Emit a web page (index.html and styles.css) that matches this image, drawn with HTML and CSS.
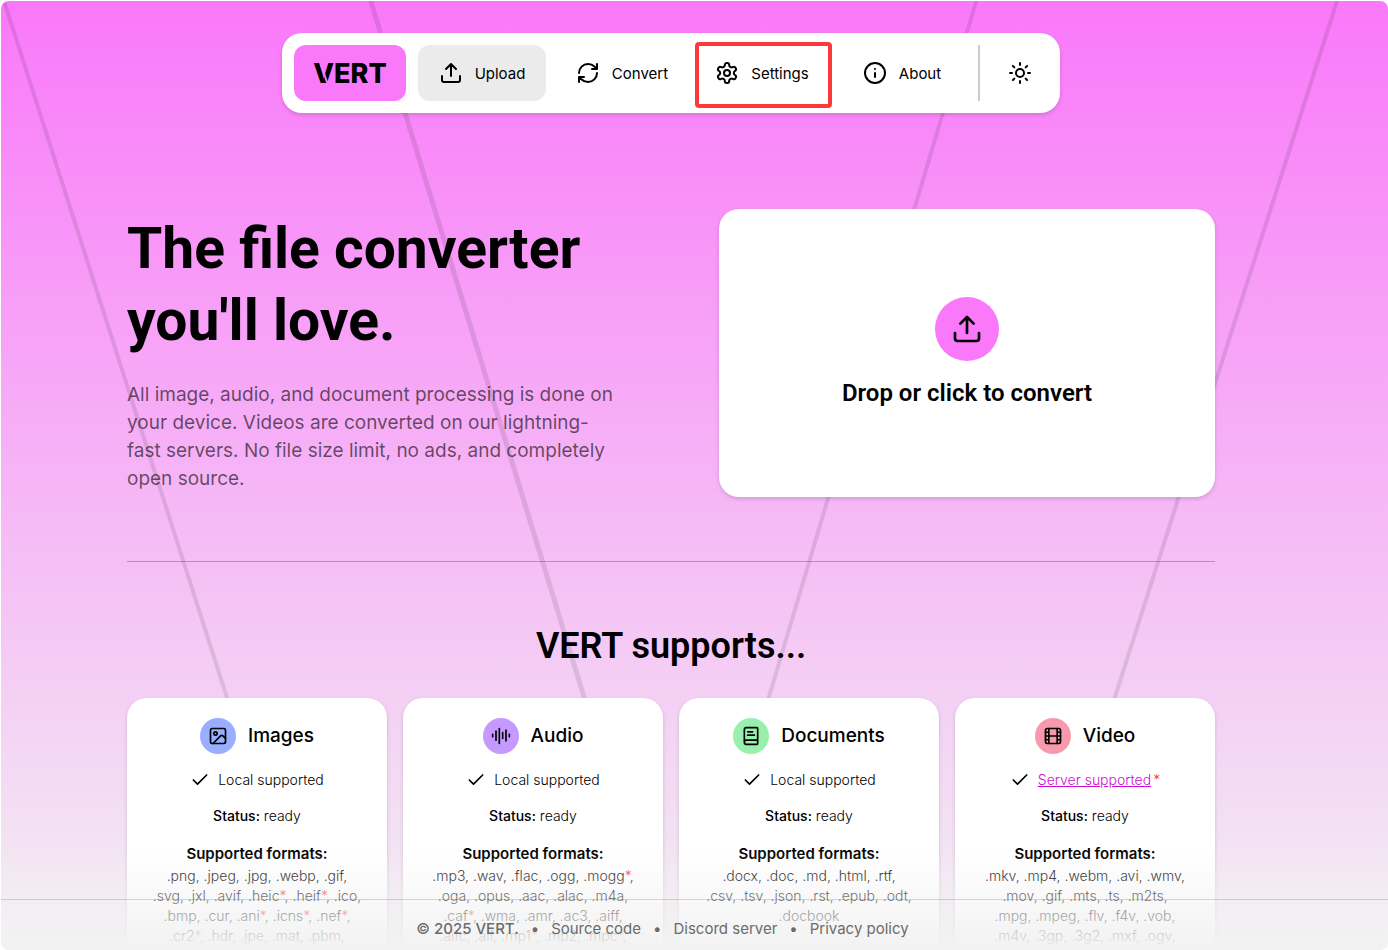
FILE: index.html
```html
<!DOCTYPE html>
<html lang="en">
<head>
    <meta charset="UTF-8">
    <meta name="viewport" content="width=device-width, initial-scale=1.0">
    <title>VERT</title>
    <link rel="stylesheet" href="styles.css">
</head>
<body>
<div class="page">
    <svg class="lines" viewBox="0 0 1388 950" preserveAspectRatio="none" aria-hidden="true">
        <path d="M3 0L307 950" stroke-width="4"/>
        <path d="M370 0L661 950" stroke-width="5"/>
        <path d="M976 0L693 950" stroke-width="4"/>
        <path d="M1337 0L1034 950" stroke-width="4"/>
    </svg>

    <header class="top">
        <nav class="navbar">
            <a class="logo" href="#"><span>VERT</span></a>
            <a class="nav-item active" href="#">
                <svg class="icon" viewBox="0 0 24 24"><path d="M21 15v4a2 2 0 0 1-2 2H5a2 2 0 0 1-2-2v-4M17 8l-5-5-5 5M12 3v12"/></svg>
                Upload
            </a>
            <a class="nav-item" href="#">
                <svg class="icon" viewBox="0 0 24 24"><path d="M3 12a9 9 0 0 1 9-9 9.75 9.75 0 0 1 6.74 2.74L21 8M21 3v5h-5M21 12a9 9 0 0 1-9 9 9.75 9.75 0 0 1-6.74-2.74L3 16M8 16H3v5"/></svg>
                Convert
            </a>
            <a class="nav-item marked" href="#">
                <svg class="icon" viewBox="0 0 24 24"><path d="M12.22 2h-.44a2 2 0 0 0-2 2v.18a2 2 0 0 1-1 1.73l-.43.25a2 2 0 0 1-2 0l-.15-.08a2 2 0 0 0-2.73.73l-.22.38a2 2 0 0 0 .73 2.73l.15.1a2 2 0 0 1 1 1.72v.51a2 2 0 0 1-1 1.74l-.15.09a2 2 0 0 0-.73 2.73l.22.38a2 2 0 0 0 2.73.73l.15-.08a2 2 0 0 1 2 0l.43.25a2 2 0 0 1 1 1.73V20a2 2 0 0 0 2 2h.44a2 2 0 0 0 2-2v-.18a2 2 0 0 1 1-1.73l.43-.25a2 2 0 0 1 2 0l.15.08a2 2 0 0 0 2.73-.73l.22-.39a2 2 0 0 0-.73-2.73l-.15-.08a2 2 0 0 1-1-1.74v-.5a2 2 0 0 1 1-1.74l.15-.09a2 2 0 0 0 .73-2.73l-.22-.38a2 2 0 0 0-2.73-.73l-.15.08a2 2 0 0 1-2 0l-.43-.25a2 2 0 0 1-1-1.73V4a2 2 0 0 0-2-2z"/><circle cx="12" cy="12" r="3"/></svg>
                Settings
            </a>
            <a class="nav-item" href="#">
                <svg class="icon" viewBox="0 0 24 24"><circle cx="12" cy="12" r="10"/><path d="M12 16v-4M12 8h.01"/></svg>
                About
            </a>
            <div class="separator"></div>
            <button class="theme-btn" aria-label="Theme">
                <svg class="icon" viewBox="0 0 24 24"><circle cx="12" cy="12" r="4"/><path d="M12 2v2M12 20v2M4.93 4.93l1.41 1.41M17.66 17.66l1.41 1.41M2 12h2M20 12h2M6.34 17.66l-1.41 1.41M19.07 4.93l-1.41 1.41"/></svg>
            </button>
        </nav>
    </header>

    <main class="content">
        <section class="hero">
            <div class="intro">
                <h1>The file converter<br>you'll love.</h1>
                <p>All image, audio, and document processing is done on<br>your device. Videos are converted on our lightning-<br>fast servers. No file size limit, no ads, and completely<br>open source.</p>
            </div>
            <button class="dropzone">
                <span class="drop-icon">
                    <svg viewBox="0 0 24 24"><path d="M21 15v4a2 2 0 0 1-2 2H5a2 2 0 0 1-2-2v-4M17 8l-5-5-5 5M12 3v12"/></svg>
                </span>
                Drop or click to convert
            </button>
        </section>

        <hr>

        <section class="supports">
            <h2>VERT supports...</h2>
            <div class="cards">
                <div class="card">
                    <h3><span class="badge blue"><svg viewBox="0 0 24 24"><rect x="3" y="3" width="18" height="18" rx="2"/><circle cx="9" cy="9" r="2"/><path d="m21 15-3.086-3.086a2 2 0 0 0-2.828 0L6 21"/></svg></span>Images</h3>
                    <p class="support"><svg viewBox="0 0 24 24"><path d="M20 6 9 17l-5-5"/></svg>Local supported</p>
                    <p><b>Status:</b> ready</p>
                    <div class="formats">
                        <h4>Supported formats:</h4>
                        <p>.png, .jpeg, .jpg, .webp, .gif,<br>.svg, .jxl, .avif, .heic<i>*</i>, .heif<i>*</i>, .ico,<br>.bmp, .cur, .ani<i>*</i>, .icns<i>*</i>, .nef<i>*</i>,<br>.cr2<i>*</i>, .hdr, .jpe, .mat, .pbm,</p>
                    </div>
                </div>
                <div class="card">
                    <h3><span class="badge purple"><svg viewBox="0 0 24 24"><path d="M2 10v3M6 6v11M10 3v18M14 8v7M18 5v13M22 10v3"/></svg></span>Audio</h3>
                    <p class="support"><svg viewBox="0 0 24 24"><path d="M20 6 9 17l-5-5"/></svg>Local supported</p>
                    <p><b>Status:</b> ready</p>
                    <div class="formats">
                        <h4>Supported formats:</h4>
                        <p>.mp3, .wav, .flac, .ogg, .mogg<i>*</i>,<br>.oga, .opus, .aac, .alac, .m4a,<br>.caf<i>*</i>, .wma, .amr, .ac3, .aiff,<br>.aifc, .aif, .mp1<i>*</i>, .mp2, .mpc<i>*</i>,</p>
                    </div>
                </div>
                <div class="card">
                    <h3><span class="badge green"><svg viewBox="0 0 24 24"><path d="M4 19.500v-15A2.500 2.500 0 0 1 6.500 2H19a1 1 0 0 1 1 1v18a1 1 0 0 1-1 1H6.500a1 1 0 0 1 0-5H20M8 11h8M8 7h6"/></svg></span>Documents</h3>
                    <p class="support"><svg viewBox="0 0 24 24"><path d="M20 6 9 17l-5-5"/></svg>Local supported</p>
                    <p><b>Status:</b> ready</p>
                    <div class="formats">
                        <h4>Supported formats:</h4>
                        <p>.docx, .doc, .md, .html, .rtf,<br>.csv, .tsv, .json, .rst, .epub, .odt,<br>.docbook</p>
                    </div>
                </div>
                <div class="card">
                    <h3><span class="badge red"><svg viewBox="0 0 24 24"><rect x="3" y="3" width="18" height="18" rx="2"/><path d="M7 3v18M3 7.500h4M3 12h18M3 16.500h4M17 3v18M17 7.500h4M17 16.500h4"/></svg></span>Video</h3>
                    <p class="support"><svg viewBox="0 0 24 24"><path d="M20 6 9 17l-5-5"/></svg><span class="server"><a href="#">Server supported</a><i>*</i></span></p>
                    <p><b>Status:</b> ready</p>
                    <div class="formats">
                        <h4>Supported formats:</h4>
                        <p>.mkv, .mp4, .webm, .avi, .wmv,<br>.mov, .gif, .mts, .ts, .m2ts,<br>.mpg, .mpeg, .flv, .f4v, .vob,<br>.m4v, .3gp, .3g2, .mxf, .ogv,</p>
                    </div>
                </div>
            </div>
        </section>
    </main>

    <div class="fade"></div>
    <footer class="footer">
        <strong>© 2025 VERT.</strong>
        <span>•</span>
        <a href="#">Source code</a>
        <span>•</span>
        <a href="#">Discord server</a>
        <span>•</span>
        <a href="#">Privacy policy</a>
    </footer>
</div>
</body>
</html>
```

FILE: styles.css
```css
* {
    margin: 0;
    padding: 0;
    box-sizing: border-box;
}

body {
    height: 100vh;
    padding: 1px 0 0 1px;
    overflow: hidden;
    background-color: #fff;
    color: #000;
    font-family: Inter, "Liberation Sans", sans-serif;
    font-size: 16px;
}

a {
    color: inherit;
    text-decoration: none;
}

button {
    border: none;
    background: none;
    color: inherit;
    font-family: inherit;
    cursor: pointer;
}

svg {
    fill: none;
    stroke: #000;
    stroke-width: 2;
    stroke-linecap: round;
    stroke-linejoin: round;
}

.page {
    position: relative;
    height: 100%;
    padding: 32px 47px 0 0;
    overflow: hidden;
    border-radius: 8px;
    background: linear-gradient(#fa78fa, #f2f0f2);
}

.lines {
    position: absolute;
    inset: 0;
    width: 100%;
    height: 100%;
    stroke: rgba(0, 0, 0, 0.1);
}

.top {
    position: relative;
    display: flex;
    justify-content: center;
}

.navbar {
    display: flex;
    gap: 12px;
    padding: 12px;
    border-radius: 20px;
    background-color: #fff;
    box-shadow: 0 2px 4px rgba(0, 0, 0, 0.15);
}

.logo {
    display: flex;
    justify-content: center;
    align-items: center;
    width: 112px;
    height: 56px;
    border-radius: 12px;
    background-color: #fa78fa;
    font-size: 27px;
    font-weight: 800;
}

.logo span {
    position: relative;
}

/* the slit in the V */
.logo span::after {
    content: "";
    position: absolute;
    top: 6px;
    left: 10px;
    width: 2px;
    height: 21px;
    background-color: #fa78fa;
    transform: skewX(19deg);
}

.nav-item {
    position: relative;
    display: flex;
    justify-content: center;
    align-items: center;
    gap: 12px;
    width: 128px;
    height: 56px;
    border-radius: 12px;
    font-size: 15px;
}

.active {
    background-color: #ebebeb;
}

.marked::after {
    content: "";
    position: absolute;
    inset: -3px -6px -7px -3px;
    border: 4px solid #ff3838;
    border-radius: 4px;
}

.icon {
    width: 24px;
    height: 24px;
}

.separator {
    width: 2px;
    background-color: #ccc;
}

.theme-btn {
    display: flex;
    justify-content: center;
    align-items: center;
    width: 56px;
}

.content {
    position: relative;
    max-width: 1088px;
    margin: 96px auto 0;
}

.hero {
    display: grid;
    grid-template-columns: repeat(2, minmax(0, 1fr));
    gap: 96px;
    align-items: center;
    padding-bottom: 64px;
}

h1 {
    font-family: Roboto, sans-serif;
    font-size: 57px;
    line-height: 72px;
    font-weight: 700;
    white-space: nowrap;
}

.intro p {
    margin-top: 24px;
    font-size: 19px;
    line-height: 28px;
    color: rgba(0, 0, 0, 0.6);
    white-space: nowrap;
}

.dropzone {
    display: flex;
    flex-direction: column;
    justify-content: center;
    align-items: center;
    gap: 16px;
    height: 288px;
    border-radius: 20px;
    background-color: #fff;
    box-shadow: 0 2px 4px rgba(0, 0, 0, 0.15);
    font-family: Roboto, sans-serif;
    font-size: 24px;
    line-height: 32px;
    font-weight: 600;
}

.drop-icon {
    display: flex;
    justify-content: center;
    align-items: center;
    width: 64px;
    height: 64px;
    border-radius: 50%;
    background-color: #fa78fa;
}

.drop-icon svg {
    width: 32px;
    height: 32px;
}

hr {
    height: 1px;
    border: none;
    background-color: rgba(0, 0, 0, 0.25);
}

h2 {
    margin: 64px 0 32px;
    text-align: center;
    font-family: Roboto, sans-serif;
    font-size: 36px;
    line-height: 40px;
    font-weight: 600;
}

.cards {
    display: grid;
    grid-template-columns: repeat(4, minmax(0, 1fr));
    gap: 16px;
}

.card {
    display: flex;
    flex-direction: column;
    align-items: center;
    gap: 16px;
    padding: 20px;
    border-radius: 20px;
    background-color: #fff;
    box-shadow: 0 2px 4px rgba(0, 0, 0, 0.15);
    font-size: 14px;
    line-height: 20px;
    font-weight: 300;
    text-align: center;
    white-space: nowrap;
}

.card h3 {
    display: flex;
    align-items: center;
    gap: 12px;
    font-size: 19px;
    font-weight: 500;
}

.badge {
    display: flex;
    justify-content: center;
    align-items: center;
    width: 36px;
    height: 36px;
    border-radius: 50%;
}

.badge svg {
    width: 20px;
    height: 20px;
}

.blue {
    background-color: #99aeff;
}

.purple {
    background-color: #c599ff;
}

.green {
    background-color: #99efad;
}

.red {
    background-color: #f899ad;
}

.support {
    display: flex;
    align-items: center;
    gap: 8px;
}

.support svg {
    width: 20px;
    height: 20px;
}

.support a {
    color: #d010d0;
    text-decoration: underline;
}

.server {
    display: flex;
    gap: 2px;
}

.card b {
    font-weight: 500;
}

.card i {
    color: #ee3b3b;
    font-style: normal;
}

.card h4 {
    font-size: 15px;
    line-height: 24px;
    font-weight: 600;
}

.formats {
    min-height: 144px;
}

.fade {
    position: absolute;
    left: 0;
    right: 0;
    bottom: 0;
    height: 100px;
    background: linear-gradient(rgba(242, 242, 242, 0), #f2f2f2);
}

.footer {
    position: absolute;
    left: 0;
    right: 0;
    bottom: 0;
    display: flex;
    justify-content: center;
    align-items: center;
    gap: 12px;
    height: 51px;
    padding: 6px 64px 0 0;
    border-top: 1px solid rgba(0, 0, 0, 0.15);
    color: #6b6b6b;
    font-size: 15px;
}

.footer strong {
    font-weight: 500;
}
```
